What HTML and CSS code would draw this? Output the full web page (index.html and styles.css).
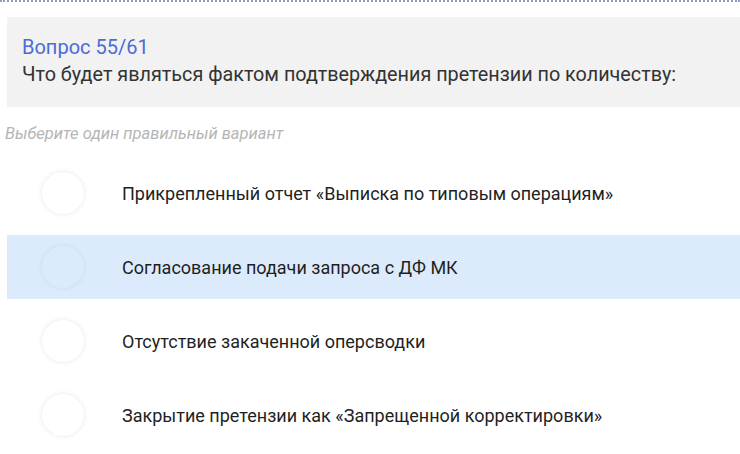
FILE: index.html
```html
<!DOCTYPE html>
<html lang="ru">

<head>
    <meta charset="UTF-8">
    <meta name="viewport" content="width=device-width, initial-scale=1.0">
    <title>Тест</title>
    <link rel="stylesheet" href="styles.css">
</head>

<body>
    <div class="divider"></div>

    <div class="quiz">
        <div class="question-box">
            <div class="question-num">Вопрос 55/61</div>
            <div class="question-text">Что будет являться фактом подтверждения претензии по количеству:</div>
        </div>

        <p class="hint">Выберите один правильный вариант</p>

        <ul class="answers">
            <li class="answer">
                <span class="radio"></span>
                <span class="answer-text">Прикрепленный отчет «Выписка по типовым операциям»</span>
            </li>
            <li class="answer active">
                <span class="radio"></span>
                <span class="answer-text">Согласование подачи запроса с ДФ МК</span>
            </li>
            <li class="answer">
                <span class="radio"></span>
                <span class="answer-text">Отсутствие закаченной оперсводки</span>
            </li>
            <li class="answer">
                <span class="radio"></span>
                <span class="answer-text">Закрытие претензии как «Запрещенной корректировки»</span>
            </li>
        </ul>
    </div>
</body>

</html>
```

FILE: styles.css
```css
* {
    margin: 0;
    padding: 0;
    box-sizing: border-box;
}

body {
    background-color: #fff;
    font-family: Roboto, "Noto Sans", sans-serif;
    color: #333;
}

.divider {
    height: 2px;
    border-top: 2px dotted #8f9ec0;
}

.quiz {
    padding: 15px 0 0 7px;
}

.question-box {
    background-color: #f2f2f2;
    padding: 17px 15px 18px;
}

.question-num {
    font-size: 20px;
    line-height: 26px;
    color: #4b6bd6;
}

.question-text {
    margin-top: 1px;
    font-size: 19.8px;
    line-height: 28px;
    color: #333;
}

.hint {
    margin: 17px 0 0 -2px;
    font-size: 16.5px;
    line-height: 20px;
    font-style: italic;
    color: #b5b5b5;
}

.answers {
    list-style: none;
    margin-top: 17px;
}

.answer {
    display: flex;
    align-items: center;
    height: 64px;
    margin-bottom: 10px;
    padding-left: 35px;
}

.answer.active {
    background-color: #dcebfb;
}

.radio {
    flex-shrink: 0;
    width: 42px;
    height: 42px;
    border-radius: 50%;
    background-color: #fff;
    box-shadow: 0 0 5px rgba(0, 0, 0, 0.1);
}

.answer.active .radio {
    background-color: #dcebfb;
    box-shadow: 0 0 5px rgba(0, 0, 0, 0.08);
}

.answer-text {
    margin-left: 38px;
    font-size: 18px;
    color: #1f1f1f;
}
```
